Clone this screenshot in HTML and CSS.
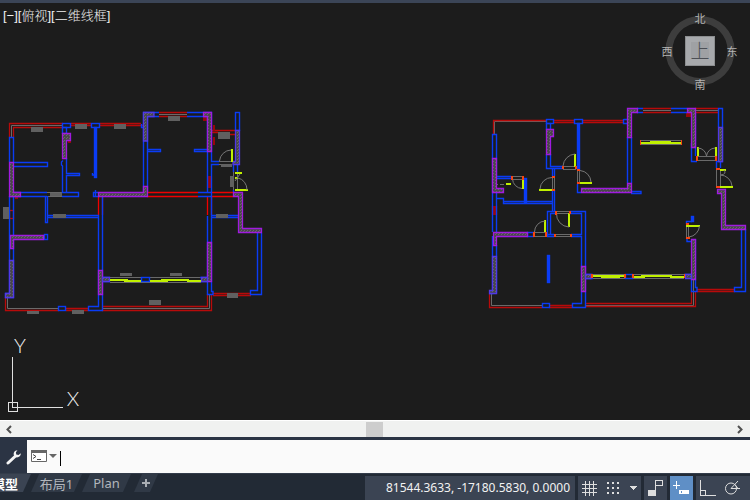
FILE: index.html
```html
<!DOCTYPE html>
<html lang="zh-CN">
<head>
<meta charset="utf-8">
<title>CAD</title>
<link rel="stylesheet" href="styles.css">
</head>
<body>
<main class="canvas">
  <nav class="view-controls" aria-label="视口">
    <button type="button">[−]</button><button type="button">[俯视]</button><button type="button">[二维线框]</button>
  </nav>
  <svg class="drawing" viewBox="0 3 750 417" preserveAspectRatio="xMinYMin slice">
    <defs>
      <pattern id="hatch" width="3" height="3" patternUnits="userSpaceOnUse">
        <rect width="3" height="3" fill="#484848"/><path d="M0 0h1v1H0zM1 2h1v1H1z" fill="#676767"/>
      </pattern>
    </defs>

    <!-- left plan -->
    <g class="plan">
      <g class="gray">
        <path d="M11.500 137V125.500H63M47 192.500H62M47 196.500H62M102 308.500H209.500V294M110 277.500H201M110 282.500H201M219 161.500H232M219 164.500H232M233.500 172V190M237.500 172V190M159 114.500H187M7.500 297V308.500H59"/>
      </g>
      <g class="dred">
        <path d="M9.500 137V123.500H63M13.500 137V127.500H63M71 123.500H91M71 125.500H91M100 123.500H141M100 125.500H143M159 112.500H187M159 116.500H187M211 130.500H235M211 132.500H218M230 134.500H235M5.500 297V310.500H59M66 308.500H88M66 310.500H88M102 306.500H207.500V294M102 310.500H211.500V294M213 293.500H251M213 295.500H251"/>
        <rect x="9.500" y="210.500" width="4" height="8"/>
      </g>
      <path class="dredfill" d="M68 141h3v2h-3zM15 197h3v2h-3zM213 125h2v6h-2zM213 137h2v8h-2zM203 116h5v5h-5zM208 176h3v12h-3z"/>
      <path class="red" d="M147 192.500H198M147 196.500H198M211 192.500H233M211 196.500H233M98.500 196V215M102.500 196V215M207.500 196V215M211.500 196V215"/>
      <g class="blue">
        <path d="M9.500 162V137.500H13.500V162M13 162.500H47.500V166.500H13M63 166H62.500V192.500H78.500V196.500H62M63 166.500L61.500 165V162L63 160.500M66.500 158V173.500H79.500V175.500H66.500V192M9.500 192.500H47M9.500 196.500H47M45.500 196V222.500H47.500V196M47 215.500H98.500V306.500H88.500V310.500H102.500V196M47 217.500H98M9.500 196V260M13.500 196V235M13.500 240V260M9.500 260V293.500H5.500V297.500H13.500V260M102 277.500H110M102 281.500H110M143.500 196V112.500H159M147.500 192V116.500H159M187 112.500H211.500V161.500H219M187 116.500H207.500V192M147 149.500H160.500V151.500H147M207 149.500H194.500V151.500H207M219 164.500H211.500V192.500M198 192.500H211M198 196.500H211M207.500 216V294.500H213V291.500H211.500V164M211 215.500H238M211 217.500H238M257.500 233V290.500H250.500V294.500H261.500V233M233.500 165V172M237.500 165V172M200 277.500H207M200 281.500H207M98 192.500H93.500V196.500H98M95.500 190V196M233.500 190V192M141.500 124V127.500H143"/>
        <rect class="solid" x="94.500" y="127.500" width="2" height="50"/>
        <path d="M92.500 173v2h2"/>
        <rect x="62.500" y="123.500" width="8" height="4"/><rect x="62.500" y="127.500" width="4" height="6"/>
        <rect x="91.500" y="123.500" width="8" height="4"/><rect x="44.500" y="234.500" width="3" height="5"/>
        <rect x="58.500" y="306.500" width="7" height="4"/><rect x="141.500" y="277.500" width="8" height="4"/>
        <rect x="235.500" y="112.500" width="4" height="18"/>
      </g>
      <g class="wall">
        <path d="M9.500 162.500H13.500V192.500H20.500V196.500H9.500ZM62.500 133.500H70.500V140.500H66.500V158.500H62.500ZM98.500 192.500H143.500V186.500H147.500V196.500H98.500ZM10.500 235.500H43.500V239.500H13.500V248.500H10.500ZM98.500 270.500H102.500V294.500H98.500ZM203.500 112.500H211.500V151.500H207.500V116.500H203.500ZM207.500 242.500H211.500V281.500H207.500ZM233.500 192.500H242.500V228.500H261.500V232.500H238.500V196.500H233.500Z"/>
        <path class="cool" d="M143.500 112.500H154V116.500H147.500V141H143.500ZM235.500 130.500H239.500V164.500H233V161.500H235.500ZM9.500 260.500H13.500V297.500H5.500V293.500H9.500ZM102.500 277.500H109.500V281.500H102.500ZM201.500 277.500H207.500V281.500H201.500Z"/>
      </g>
      <path class="tag" d="M31 127h12v5H31zM75 124h12v5H75zM114 124h12v5H114zM50 193h12v3H50zM3 207h6v12H3zM53 214h13v4H53zM27 311h12v3H27zM72 310h12v4H72zM120 273h12v3H120zM170 273h12v3H170zM149 300h12v5H149zM168 116h12v5H168zM218 132h12v7H218zM221 164h11v3H221zM230 176h4v11H230zM216 214h12v4H216zM227 293h11v5H227z"/>
      <path class="yellow" d="M110 279.500H128M124 280.500H141M150 280.500H168M161 279.500H189M187 280.500H201M232 149V162M235 173H242M235 178H238M235 190H248"/>
      <path class="arc" d="M219.500 161A12 12 0 0 1 231 150M238 178A11 12 0 0 1 247 190M235 181L240 174"/>
    </g>

    <!-- right plan -->
    <g class="plan">
      <g class="gray">
        <path d="M494.500 134V121.500H547M643 110.500H671M695 110.500H718M491.500 294V305.500H542M586 305.500H693.500V259M593 274.500H684M593 278.500H684M556 211.500H570M556 213.500H570M554 234.500H571M554 236.500H571M534 232.500H547M534 236.500H547M563 166.500H576M563 169.500H576M577.500 170V184M579.500 170V184M552.500 177V190M554.500 177V190M512 176.500H523M512 179.500H523M697 156.500H717M697 160.500H717M716.500 169V188M720.500 169V188M686.500 223V238M688.500 223V238M640 140.500H682M640 144.500H682"/>
        <path d="M494 184.500H505" stroke-dasharray="4 2"/>
      </g>
      <path class="dred" d="M493.500 134V120.500H547M554 120.500H574M554 122.500H574M582 120.500H623M582 122.500H623M643 108.500H671M643 112.500H671M695 108.500H718M695 112.500H718M492.500 206V215M496.500 206V215M489.500 294V307.500H542M549 305.500H572M549 307.500H572M586 303.500H691.500V291M586 306.500H695.500V291M697 289.500H735M697 291.500H735"/>
      <path class="dredfill" d="M686 112h5v5h-5zM493 206h4v9h-4z"/>
      <g class="blue">
        <path d="M492.500 232V134.500H496.500V176.500H511M496 178.500H511M496.500 193V198.500H503.500V203.500H552.500V190M496.500 198V232M503 201.500H552M546.500 154V168.500H563M550.500 154V166.500H563M552.500 168V176M554.500 168V176M554.500 190V211M577.500 184V192.500H581M552.500 203V211M492.500 236V293.500H489M496.500 245V293.500M547.500 236V211.500H556M550.500 213.500H556M570 211.500H585.500V307.500H572.500V303.500H581.500V236.500H571M570 213.500H581.500V234.500H571M550.500 213V234.500M547 234.500H554M547 236.500H554M627.500 137V183M631.500 137V183M631 191.500H641V193.500H631M671 108.500H687M671 112.500H687M637 108.500H643M637 112.500H643M691.500 143V161.500H697M695.500 112V156M718.500 127V108.500H722.500V161.500H717M716.500 161V168M720.500 161V168M741.500 229V287.500H734.500V291.500H745.500V229M691.500 279V291.500H697V287.500H695.500V239M585 274.500H593M585 278.500H593M684 274.500H691M687 239V241.500H691"/>
        <rect x="546.500" y="119.500" width="7" height="4"/><rect x="546.500" y="123.500" width="4" height="6"/>
        <rect x="574.500" y="119.500" width="8" height="4"/>
        <rect class="solid" x="577.500" y="123.500" width="2" height="46"/>
        <rect class="solid" x="524.500" y="178.500" width="2" height="24"/>
        <rect class="solid" x="547.500" y="255.500" width="2" height="27"/>
        <rect x="527.500" y="232.500" width="6" height="4"/><rect x="542.500" y="303.500" width="7" height="4"/>
        <rect x="625.500" y="274.500" width="7" height="4"/><rect class="solid" x="691.500" y="216.500" width="2" height="5"/>
        <path d="M686.500 224V221.500H692M623.500 119.500H627M623.500 119V123.500H627"/>
      </g>
      <g class="wall">
        <path d="M492.500 158.500H496.500V188.500H503.500V192.500H492.500ZM546.500 129.500H553.500V136.500H550.500V154.500H546.500ZM581.500 188.500H627.500V183.500H631.500V192.500H581.500ZM627.500 108.500H637.500V112.500H631.500V137.500H627.500ZM687.500 108.500H695.500V147.500H691.500V112.500H687.500ZM493.500 232.500H527.500V236.500H496.500V245.500H493.500ZM581.500 266.500H585.500V291.500H581.500ZM691.500 239.500H695.500V279.500H691.500ZM717.500 189.500H725.500V225.500H745.500V229.500H721.500V193.500H717.500Z"/>
        <path class="cool" d="M718.500 127.500H722.500V161.500H718.500ZM492.500 256.500H496.500V293.500H489.500V290.500H492.500ZM585.500 274.500H591V278.500H585.500ZM685.500 274.500H691.500V278.500H685.500Z"/>
      </g>
      <path class="yellow" d="M593 276H624M601 276.500H620M633 277H645M641 275.500H672M670 276.500H684M640 142.500H682M650 141.500H671M575 154V167M579 182.500H592M539 189.500H553M522.500 179V189M506 184H511M569 213V227M545 220V232M697.500 147V156M715.500 147V156M720 186.500H733M720 169.500H726M686 225.500H700"/>
      <path class="arc" d="M563 166A13 13 0 0 1 575 154M580 170.500A12 12 0 0 1 591 182M552 177.500A12 12 0 0 0 540 189M512.500 179A10 10 0 0 0 522 188.500M556.500 213A13 13 0 0 0 569 227M534.500 232A11 11 0 0 1 545 221M698 148A9 9 0 0 1 706.500 156A9 9 0 0 1 715 148M720.500 175A12 12 0 0 1 732 186M724 170Q727 174 721 175M699.500 226A12 12 0 0 1 689 237"/>
      <path class="ends" d="M562 166h2v3h-2zM575 166h2v3h-2zM577 169h3v2h-3zM577 182h3v2h-3zM552 176h3v2h-3zM552 189h3v2h-3zM511 176h2v4h-2zM522 176h2v4h-2zM555 211h2v4h-2zM569 211h2v3h-2zM554 234h2v3h-2zM570 234h2v3h-2zM533 232h2v5h-2zM545 232h2v5h-2zM696 156h2v5h-2zM715 156h2v5h-2zM716 168h4v2h-4zM716 186h4v2h-4zM686 223h3v2h-3zM686 237h4v2h-4zM591 274h2v4h-2zM624 274h2v4h-2zM632 274h2v4h-2zM684 274h1v4h-1zM640 140h1v5h-1zM681 140h1v5h-1z"/>
    </g>

    <!-- coordinate axes -->
    <g class="axes">
      <path d="M12.500 357V407.500H63"/><rect x="8.500" y="402.500" width="9" height="9"/>
    </g>
    <text class="axis-label" x="20" y="353">Y</text>
    <text class="axis-label" x="73" y="406">X</text>

    <!-- view cube -->
    <circle class="ring" cx="700" cy="50.500" r="31"/>
    <rect class="cube" x="685.500" y="36.500" width="29" height="29"/>
    <rect class="cube-face" x="691" y="42" width="18" height="17"/>
    <text class="cube-top" x="700" y="58">上</text>
    <g class="compass">
      <text x="700" y="23">北</text><text x="667" y="56">西</text><text x="732" y="56">东</text><text x="700" y="89">南</text>
    </g>
  </svg>
</main>

<div class="scrollbar">
  <button type="button" aria-label="向左"><svg width="8" height="9" viewBox="0 0 8 9"><path d="M6 1L2.500 4.500L6 8"/></svg></button>
  <span class="track"></span><span class="thumb"></span><span class="track"></span>
  <button type="button" aria-label="向右"><svg width="8" height="9" viewBox="0 0 8 9"><path d="M2 1L5.500 4.500L2 8"/></svg></button>
</div>

<div class="command">
  <button class="wrench" type="button" aria-label="自定义">
    <svg width="16" height="16" viewBox="0 0 16 16"><path d="M2 14L9 7.500" stroke="#f4f4f4" stroke-width="3" stroke-linecap="round"/><path d="M11.500 1.200C8.500 1.200 7 4 8 6.500L9.800 8.300C12.500 9 15 7 14.800 4.300L12.500 6L10.200 5.400L9.900 3.300Z" fill="#f4f4f4"/></svg>
  </button>
  <label class="entry">
    <svg width="27" height="13" viewBox="0 0 27 13"><path d="M.5 .5H15.500V11.500H.5Z" fill="#fff" stroke="#666"/><path d="M0 0H16V3H0Z" fill="#666"/><path d="M2 4.500L5 6.500L2 8.500M6 9.500H10" fill="none" stroke="#444"/><path d="M18 4H26L22 8Z" fill="#666"/></svg>
    <span class="caret"></span>
    <input type="text" aria-label="命令">
  </label>
</div>

<footer class="status">
  <nav class="tabs" aria-label="布局">
    <button class="tab model" type="button"><span>模型</span></button>
    <button class="tab layout" type="button"><span>布局1</span></button>
    <button class="tab plan-tab" type="button"><span>Plan</span></button>
    <button class="tab add" type="button" aria-label="新建布局"><svg width="8" height="8" viewBox="0 0 8 8"><path d="M0 3H3V0H5V3H8V5H5V8H3V5H0Z" fill="#a9adb3"/></svg></button>
  </nav>
  <div class="tools">
    <output class="coords">81544.3633, -17180.5830, 0.0000</output>
    <div class="group grid-tools">
      <button type="button" aria-label="栅格"><svg width="15" height="15" viewBox="0 0 15 15"><path d="M3.500 0V15M7.500 0V15M11.500 0V15M0 3.500H15M0 7.500H15M0 11.500H15"/></svg></button>
      <button type="button" aria-label="捕捉"><svg width="13" height="13" viewBox="0 0 13 13"><path class="fill" d="M0 0h2v2H0zM5 0h2v2H5zM10 0h2v2h-2zM0 5h2v2H0zM5 5h2v2H5zM10 5h2v2h-2zM0 10h2v2H0zM5 10h2v2H5zM10 10h2v2h-2z"/></svg></button>
      <button type="button" aria-label="捕捉选项"><svg width="7" height="4" viewBox="0 0 7 4"><path class="fill" d="M0 0H7L3.500 4Z"/></svg></button>
    </div>
    <div class="group single">
      <button type="button" aria-label="推断约束"><svg width="16" height="16" viewBox="0 0 16 16"><path class="fill" d="M0 10h8v6H0z"/><path d="M7.500 10V.5H14.500V5.500H8"/></svg></button>
    </div>
    <div class="group single active">
      <button type="button" aria-label="动态输入"><svg width="17" height="14" viewBox="0 0 17 14"><path class="bright" d="M3.500 0V8M0 4.500H7"/><path class="fill bright-fill" d="M6 9h10v4H6z"/><path class="slot" d="M8.500 10v2"/></svg></button>
    </div>
    <div class="group last">
      <button type="button" aria-label="正交"><svg width="16" height="16" viewBox="0 0 16 16"><path d="M.5 0V15.500H16M.5 10.500H5.500V15"/></svg></button>
      <button type="button" aria-label="极轴"><svg width="18" height="16" viewBox="0 0 18 16"><g class="smooth"><circle cx="7" cy="8.500" r="5.500"/><path d="M7 8.500H16M7 8.500L14 1M11 4.500L14 8.500"/></g></svg></button>
      <button type="button" aria-label="极轴选项"><svg width="7" height="4" viewBox="0 0 7 4"><path class="fill" d="M0 0H7L3.500 4Z"/></svg></button>
    </div>
  </div>
</footer>
</body>
</html>
```
FILE: styles.css
```css
* { box-sizing: border-box; }
body {
  margin: 0;
  height: 100vh;
  display: flex;
  flex-direction: column;
  overflow: hidden;
  background: #222a35;
  font-family: "Noto Sans", "Noto Sans CJK SC", sans-serif;
  font-size: 12px;
}
button {
  padding: 0;
  border: 0;
  background: none;
  color: inherit;
  font: inherit;
  display: flex;
  align-items: center;
  justify-content: center;
}
svg { display: block; flex: none; }

.canvas {
  position: relative;
  flex: 1;
  min-height: 0;
  border-top: 3px solid #3b4557;
  background: #1c1c1c;
}
.drawing { width: 100%; height: 100%; }
.view-controls {
  position: absolute;
  top: 4px;
  left: 3px;
  display: flex;
  color: #f0f0f0;
  font-family: "Liberation Sans", "Noto Sans CJK SC", sans-serif;
  font-size: 13px;
  font-weight: 300;
  line-height: 18px;
}

.plan path, .plan rect { fill: none; }
.plan .gray { stroke: #6a6a6a; }
.plan .dred { stroke: #b80a0a; stroke-width: 1.3; }
.plan .red { stroke: #f00000; stroke-width: 1.3; }
.plan .dred rect, .plan .dred path { stroke: #b80a0a; }
.plan .blue { stroke: #0a3cf5; stroke-width: 1.4; }
.plan .solid { fill: #0a3cf5; }
.plan .wall { stroke-width: 1.3; }
.plan .wall path { fill: url(#hatch); stroke: #a01ae0; }
.plan .wall .cool { stroke: #5038e8; }
.plan .dredfill { fill: #980808; }
.plan .tag { fill: #606060; }
.plan .yellow { stroke: #c0f000; stroke-width: 2; shape-rendering: crispEdges; }
.plan .arc { stroke: #777; }
.plan .ends { fill: #f84410; }
.axes path, .axes rect { fill: none; stroke: #e0e0e0; shape-rendering: crispEdges; }
.axis-label {
  fill: #f0f0f0;
  font-family: Lato, "Liberation Sans", sans-serif;
  font-size: 20px;
  font-weight: 300;
  text-anchor: middle;
}
.ring { fill: none; stroke: #3d3d3d; stroke-width: 7; }
.cube { fill: #a7a9ac; stroke: #8c8e90; }
.cube-face { fill: #9fa1a4; }
.cube-top {
  fill: #4c4f55;
  font-family: "Noto Sans CJK SC", sans-serif;
  font-size: 19px;
  font-weight: 300;
  text-anchor: middle;
}
.compass {
  fill: #b4b4b4;
  font-family: "Noto Sans CJK SC", sans-serif;
  font-size: 11px;
  text-anchor: middle;
}

.scrollbar {
  flex: none;
  display: flex;
  align-items: center;
  height: 17px;
  padding-right: 2px;
  background: #f0f1f0;
  border-top: 1px solid #fff;
}
.scrollbar button { width: 17px; height: 16px; }
.scrollbar path { fill: none; stroke: #505050; stroke-width: 2; }
.track { flex: 1; }
.thumb { width: 17px; height: 15px; background: #cdcdcd; }

.command {
  flex: none;
  display: flex;
  height: 36px;
  padding-top: 3px;
  background: #2b3444;
}
.wrench { width: 27px; }
.entry {
  flex: 1;
  display: flex;
  align-items: center;
  gap: 2px;
  padding-left: 4px;
  background: #fafafa;
}
.caret { width: 1px; height: 15px; margin-top: 4px; background: #000; }
.entry input {
  flex: 1;
  min-width: 0;
  border: 0;
  outline: 0;
  background: none;
  font: inherit;
}

.status {
  flex: none;
  display: flex;
  justify-content: space-between;
  height: 27px;
  border-top: 1px solid #333c4a;
}
.tabs { display: flex; height: 18px; color: #b2b6bc; font-size: 13px; }
.tab { position: relative; height: 18px; white-space: nowrap; }
.tab::before {
  content: "";
  position: absolute;
  inset: 0;
  background: #303946;
  clip-path: polygon(8px 0, 100% 0, calc(100% - 8px) 100%, 0 100%);
}
.tab span, .tab svg { position: relative; }
.model { width: 31px; justify-content: flex-end; padding-right: 13px; color: #fff; font-weight: 700; }
.model::before { background: #3b4453; clip-path: polygon(0 0, 100% 0, calc(100% - 8px) 100%, 0 100%); }
.layout { width: 51px; }
.plan-tab { width: 49px; }
.add { width: 24px; margin-left: 3px; }

.tools { display: flex; gap: 3px; padding-top: 2px; color: #f2f2f2; }
.coords {
  width: 210px;
  padding-right: 5px;
  background: #3b4453;
  line-height: 24px;
  text-align: right;
  white-space: nowrap;
}
.group { display: flex; align-items: center; background: #3b4453; }
.group path, .group circle { fill: none; stroke: #dedede; shape-rendering: crispEdges; }
.group .smooth * { shape-rendering: auto; }
.group .fill { fill: #dedede; stroke: none; }
.group .bright { stroke: #fff; }
.group .bright-fill { fill: #fff; }
.group .slot { stroke: #5f8fc6; }
.grid-tools { width: 63px; padding-left: 4px; gap: 10px; }
.single { width: 23px; justify-content: center; }
.active { background: #5f8fc6; }
.last { width: 54px; padding-left: 4px; gap: 8px; overflow: hidden; }
```
